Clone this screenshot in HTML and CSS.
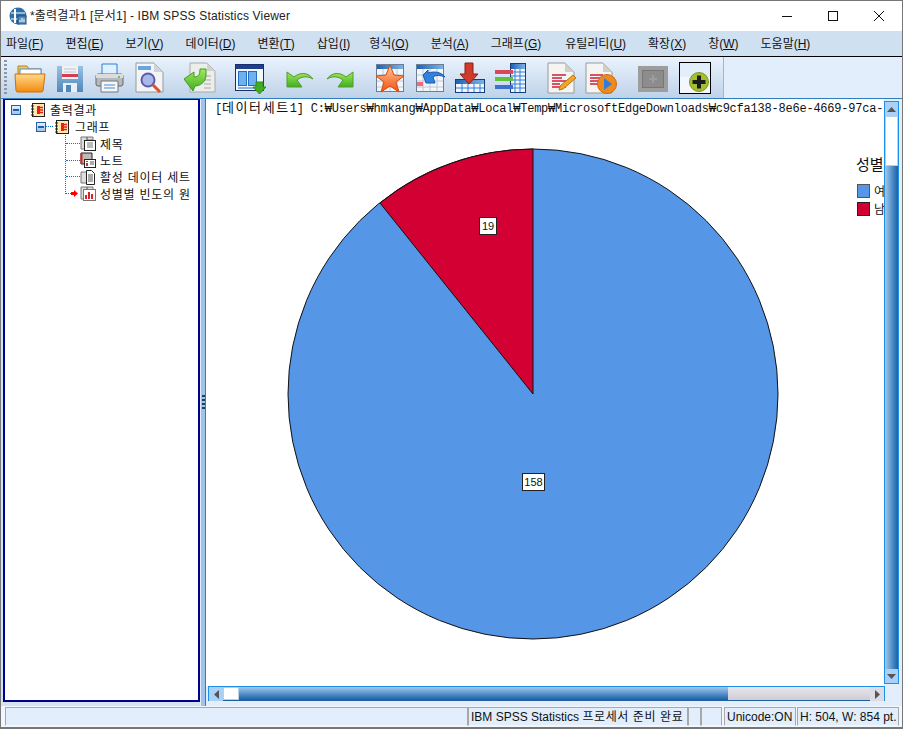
FILE: index.html
```html
<!DOCTYPE html>
<html lang="ko">

<head>
  <meta charset="UTF-8">
  <meta name="viewport" content="width=device-width, initial-scale=1.0">
  <title>출력결과1 - IBM SPSS Statistics Viewer</title>
  <link rel="stylesheet" href="styles.css">
</head>

<body>
  <div class="window">

    <header class="titlebar">
      <svg class="app-icon" width="18" height="18" viewBox="0 0 18 18">
        <circle cx="9" cy="9" r="8.5" fill="#2f6ea5"/>
        <path d="M2 6h14M2 12h14" stroke="#fff" stroke-width="1"/>
        <path d="M6 2v14" stroke="#fff" stroke-width="2"/>
        <rect x="9" y="9" width="8" height="8" fill="#5e8fbd" stroke="#1d4f80"/>
        <path d="M11 15v-2M13 15v-4M15 15v-3" stroke="#fff"/>
      </svg>
      <span class="title-text">*출력결과1 [문서1] - IBM SPSS Statistics Viewer</span>
      <div class="window-buttons">
        <svg width="46" height="30" viewBox="0 0 46 30"><path d="M18 15.5h10" stroke="#111"/></svg>
        <svg width="46" height="30" viewBox="0 0 46 30"><rect x="18.5" y="10.5" width="9" height="9" fill="none" stroke="#111"/></svg>
        <svg width="46" height="30" viewBox="0 0 46 30"><path d="M18 10l10 10M28 10l-10 10" stroke="#111"/></svg>
      </div>
    </header>

    <nav class="menubar">
      <span class="menu-item">파일(<u>F</u>)</span>
      <span class="menu-item">편집(<u>E</u>)</span>
      <span class="menu-item">보기(<u>V</u>)</span>
      <span class="menu-item">데이터(<u>D</u>)</span>
      <span class="menu-item">변환(<u>T</u>)</span>
      <span class="menu-item narrow">삽입(<u>I</u>)</span>
      <span class="menu-item">형식(<u>O</u>)</span>
      <span class="menu-item">분석(<u>A</u>)</span>
      <span class="menu-item wide">그래프(<u>G</u>)</span>
      <span class="menu-item">유틸리티(<u>U</u>)</span>
      <span class="menu-item">확장(<u>X</u>)</span>
      <span class="menu-item">창(<u>W</u>)</span>
      <span class="menu-item">도움말(<u>H</u>)</span>
    </nav>

    <div class="toolbar-row">
      <div class="toolbar">
        <div class="grip"></div>

        <svg class="tool" viewBox="0 0 32 32">
          <defs>
            <linearGradient id="folder" x1="0" y1="0" x2="0" y2="1"><stop offset="0" stop-color="#ffd98a"/><stop offset="1" stop-color="#f28a0e"/></linearGradient>
            <linearGradient id="disk" x1="0" y1="0" x2="0" y2="1"><stop offset="0" stop-color="#9ac2e4"/><stop offset="1" stop-color="#4f86ba"/></linearGradient>
            <linearGradient id="star" x1="0" y1="0" x2="0" y2="1"><stop offset="0" stop-color="#ffc9a0"/><stop offset="1" stop-color="#f2500c"/></linearGradient>
            <linearGradient id="green" x1="0" y1="0" x2="0" y2="1"><stop offset="0" stop-color="#a4e85a"/><stop offset="1" stop-color="#3fae22"/></linearGradient>
            <linearGradient id="head" x1="0" y1="0" x2="1" y2="0"><stop offset="0" stop-color="#1e62b4"/><stop offset="1" stop-color="#7fb2e6"/></linearGradient>
          </defs>
          <path d="M4 4h9l2 3h12v8H4z" fill="#f7c94f" stroke="#b9812a"/>
          <rect x="6" y="7" width="21" height="8" fill="#fff" stroke="#4a8fd0"/>
          <path d="M1 12h30l-2 17a2 2 0 0 1-2 1H4a2 2 0 0 1-2-1z" fill="url(#folder)" stroke="#c9710f"/>
        </svg>

        <svg class="tool" viewBox="0 0 32 32">
          <path d="M3 4h26v26H3z" fill="url(#disk)"/>
          <rect x="8" y="4" width="16" height="13" fill="#f2f2f2"/>
          <path d="M10 7h12M10 10h12" stroke="#b9c6d4"/>
          <rect x="8" y="12" width="16" height="3" fill="#d63a55"/>
          <rect x="9" y="21" width="14" height="9" fill="#e8eff6"/>
          <rect x="12" y="23" width="5" height="7" fill="#4f86ba"/>
        </svg>

        <svg class="tool" viewBox="0 0 32 32">
          <path d="M8 2h15v11H8z" fill="#dff0ff" stroke="#2a7fd5"/>
          <rect x="2" y="12" width="27" height="12" rx="2" fill="#b5b9bd" stroke="#666"/>
          <rect x="2" y="12" width="27" height="4" fill="#dadcde"/>
          <circle cx="25" cy="15" r="1" fill="#3fbf3f"/>
          <path d="M7 19h17v11H7z" fill="#f4f6f8" stroke="#777"/>
          <path d="M10 23h11M10 26h11" stroke="#4a8fd0"/>
        </svg>

        <svg class="tool" viewBox="0 0 32 32">
          <path d="M2 1h18l9 9v20H2z" fill="#f2f4f6" stroke="#999"/>
          <path d="M20 1v9h9z" fill="#cfd4da"/>
          <rect x="4" y="4" width="13" height="4" fill="#6aa5e0"/>
          <circle cx="14" cy="18" r="6.5" fill="#a9b8ea" stroke="#5a5fa8" stroke-width="2"/>
          <path d="M19 23l7 7" stroke="#d9532c" stroke-width="3"/>
        </svg>

        <svg class="tool gap" viewBox="0 0 32 32">
          <path d="M6 1h17l8 8v21H6z" fill="#eceeea" stroke="#aaa"/>
          <path d="M23 1v8h8z" fill="#cfd2cc"/>
          <path d="M20 14h7M20 18h7M20 22h7M20 26h7" stroke="#aaa"/>
          <path d="M0 17L10 10V15C15 15 16 12 16 7H22V13C22 20 16 24 11 24L9 29z" fill="url(#green)" stroke="#3c9a2a"/>
        </svg>

        <svg class="tool gap" viewBox="0 0 32 32">
          <rect x="1.5" y="2.5" width="28" height="26" fill="#f4f8fc" stroke="#1a2f6a"/>
          <rect x="2" y="3" width="27" height="4" fill="#1c3f92"/>
          <rect x="4.5" y="9.5" width="8" height="14" fill="#6fb1ea" stroke="#1f6fc4"/>
          <rect x="14.5" y="9.5" width="8" height="14" fill="#6fb1ea" stroke="#1f6fc4"/>
          <path d="M4 26h16" stroke="#1f6fc4"/>
          <path d="M22 20h7v5h3l-6.500 7L19 25h3z" fill="#3fae22" stroke="#2d8a1a"/>
        </svg>

        <svg class="tool gap" viewBox="0 0 32 32">
          <path d="M3 10L10 15C16 10 24 10 29 17C24 14 18 14 13 18L18 25H3z" fill="url(#green)" stroke="#4f9e2c"/>
        </svg>

        <svg class="tool" viewBox="0 0 32 32">
          <path d="M29 10L22 15C16 10 8 10 3 17C8 14 14 14 19 18L14 25H29z" fill="url(#green)" stroke="#4f9e2c"/>
        </svg>

        <svg class="tool gap" viewBox="0 0 32 32">
          <rect x="2.500" y="2.500" width="27" height="27" fill="#f2f5fa" stroke="#6c7d94"/>
          <rect x="3" y="3" width="26" height="4" fill="url(#head)"/>
          <path d="M3 13h26M3 19h26M3 25h26M9 7v22M16 7v22M23 7v22" stroke="#bcc8d8"/>
          <path d="M16 3l4 10 10 1-8 6 3 10-9-6-9 6 3-10-8-6 10-1z" fill="url(#star)" stroke="#d9480a"/>
        </svg>

        <svg class="tool" viewBox="0 0 32 32">
          <rect x="2.500" y="2.500" width="27" height="27" fill="#f2f5fa" stroke="#6c7d94"/>
          <rect x="3" y="3" width="26" height="4" fill="url(#head)"/>
          <path d="M3 13h26M3 19h26M3 25h26M9 7v22M16 7v22M23 7v22" stroke="#bcc8d8"/>
          <rect x="3" y="20" width="6" height="4" fill="#f2687c"/>
          <path d="M9 13l5-5v3c7-2 13-1 17 4-5-2-9-2-12 0l2 6H12z" fill="#2f82e0" stroke="#175aa8"/>
        </svg>

        <svg class="tool" viewBox="0 0 32 32">
          <rect x="1.500" y="17.500" width="29" height="13" fill="#f2f6fc" stroke="#153e7a"/>
          <rect x="2" y="18" width="28" height="4" fill="url(#head)"/>
          <path d="M2 26h28M8 22v8M14 22v8M20 22v8M26 22v8" stroke="#2f7fd8"/>
          <path d="M11 1h8v11h5l-9 10-9-10h5z" fill="#cf3a2a" stroke="#8c1f14"/>
        </svg>

        <svg class="tool" viewBox="0 0 32 32">
          <rect x="16.500" y="1.500" width="15" height="29" fill="#f2f6fc" stroke="#153e7a"/>
          <rect x="17" y="2" width="14" height="5" fill="url(#head)"/>
          <path d="M17 10h14M17 14h14M17 18h14M17 22h14M17 26h14M21 7v23M26 7v23" stroke="#2f7fd8"/>
          <rect x="1" y="8" width="18" height="4" fill="#d9475a"/>
          <rect x="1" y="15" width="18" height="4" fill="#63bf3f"/>
          <rect x="1" y="23" width="18" height="4" fill="#3f6fd0"/>
        </svg>

        <svg class="tool gap-page" viewBox="0 0 32 32">
          <path d="M3 1h17l9 9v21H3z" fill="#f4f4f2" stroke="#999"/>
          <path d="M20 1v9h9z" fill="#cfcfcc"/>
          <path d="M7 13h14M7 16h10M7 19h14M7 22h8M7 25h14" stroke="#cc1f3a" stroke-width="1.500"/>
          <path d="M15 24L28 13l3 3-13 11-4 1z" fill="#f5a623" stroke="#b9741a"/>
        </svg>

        <svg class="tool" viewBox="0 0 32 32">
          <path d="M1 1h17l9 9v21H1z" fill="#f4f4f2" stroke="#999"/>
          <path d="M18 1v9h9z" fill="#cfcfcc"/>
          <path d="M5 13h13M5 16h10M5 19h9M5 22h7" stroke="#cc1f3a" stroke-width="1.500"/>
          <circle cx="22" cy="22" r="9.500" fill="#f08a1c" stroke="#c96a10"/>
          <path d="M19 16l8 6-8 6z" fill="#2f7fd8"/>
        </svg>

        <svg class="tool gap-grey" viewBox="0 0 32 32">
          <rect x="1" y="4" width="30" height="26" fill="#9d9d9d"/>
          <rect x="5.500" y="8.500" width="21" height="17" fill="#8c8c8c" stroke="#777"/>
          <path d="M16 13v8M12 17h8" stroke="#9d9d9d" stroke-width="2"/>
        </svg>

        <svg class="tool gap-last" viewBox="0 0 32 32">
          <rect x="0.500" y="0.500" width="31" height="31" fill="#e3eefb" stroke="#000"/>
          <rect x="1" y="15" width="30" height="16" fill="#f4f8fd"/>
          <circle cx="20" cy="20" r="9.500" fill="#a2bf2e" stroke="#7a9420"/>
          <path d="M20 13.500v13M13.500 20h13" stroke="#1c1c1c" stroke-width="4"/>
        </svg>
      </div>
    </div>

    <main class="workspace">
      <aside class="outline">
        <ul class="tree">
          <li class="tree-row">
            <span class="expander"></span>
            <svg class="book" viewBox="0 0 14 14"><use href="#book-icon"/></svg>
            <span>출력결과</span>
          </li>
          <li class="tree-row level-1">
            <span class="expander"></span>
            <span class="dash"></span>
            <svg class="book" viewBox="0 0 14 14">
              <symbol id="book-icon" viewBox="0 0 14 14">
                <rect x="1.500" y="0.500" width="12" height="13" fill="#ffe9a8" stroke="#222"/>
                <path d="M0 3h3M0 6h3M0 9h3M0 12h3" stroke="#222"/>
                <path d="M6 3h3v8H6z" fill="#e5201c"/>
                <path d="M8 4.500h4M8 7h4M8 9.500h4" stroke="#e5201c" stroke-width="1.500"/>
              </symbol>
              <use href="#book-icon"/>
            </svg>
            <span>그래프</span>
          </li>
          <li class="leaves">
            <div class="tree-row">
              <span class="leaf-dash"></span>
              <svg class="leaf" viewBox="0 0 16 16">
                <path d="M1 2h6v12H1zM7 2h6v3H7z" fill="#ddd" stroke="#777"/>
                <rect x="4.500" y="5.500" width="11" height="10" fill="#fff" stroke="#222"/>
                <path d="M7 8h6M7 10h6M7 12h6" stroke="#777"/>
              </svg>
              <span>제목</span>
            </div>
            <div class="tree-row">
              <span class="leaf-dash"></span>
              <svg class="leaf" viewBox="0 0 16 16">
                <path d="M1 1h11v11H1z" fill="#bbb" stroke="#222"/>
                <path d="M1.500 1v11" stroke="#d22" stroke-width="2"/>
                <rect x="4.500" y="7.500" width="11" height="8" fill="#fff" stroke="#222"/>
                <path d="M7 9v1M7 11v3" stroke="#d22" stroke-width="2"/>
                <path d="M10 10h4M10 12h4" stroke="#555"/>
              </svg>
              <span>노트</span>
            </div>
            <div class="tree-row">
              <span class="leaf-dash"></span>
              <svg class="leaf" viewBox="0 0 16 16">
                <path d="M1 3h6v11H1z" fill="#ddd" stroke="#777"/>
                <path d="M6.500 1.500h5l3 3v11h-8z" fill="#fff" stroke="#222"/>
                <path d="M8 6h5M8 8h5M8 10h5M8 12h5" stroke="#555"/>
              </svg>
              <span>활성 데이터 세트</span>
            </div>
            <div class="tree-row">
              <span class="leaf-dash short"></span>
              <svg class="arrow" width="7" height="7" viewBox="0 0 7 7"><path d="M0 2h3V0l4 3.500L3 7V5H0z" fill="#f00"/></svg>
              <svg class="leaf" viewBox="0 0 16 16">
                <path d="M1 2h6v12H1zM7 2h6v3H7z" fill="#ddd" stroke="#777"/>
                <rect x="3.500" y="4.500" width="12" height="11" fill="#fff" stroke="#777"/>
                <path d="M6 14v-4M9 14V7M12 14v-5" stroke="#d22" stroke-width="2"/>
              </svg>
              <span>성별별 빈도의 원</span>
            </div>
          </li>
        </ul>
      </aside>

      <div class="splitter"><span class="splitter-dots"></span></div>

      <section class="viewer">
        <div class="viewer-main">
          <div class="viewer-canvas">
            <div class="path-line">[<span class="path-ko">데이터세트</span>1] C:₩Users₩hmkang₩AppData₩Local₩Temp₩MicrosoftEdgeDownloads₩c9cfa138-8e6e-4669-97ca-</div>
            <svg class="chart" viewBox="206 117 678 569">
              <circle cx="533" cy="394" r="245" fill="#5596e6" stroke="#111"/>
              <path d="M533 394V149A245 245 0 0 0 380 203z" fill="#d30034" stroke="#111"/>
              <rect x="479.500" y="217.500" width="17" height="17" fill="#fff" stroke="#222"/>
              <text class="data-label" x="488" y="230">19</text>
              <rect x="522.500" y="473.500" width="22" height="17" fill="#fff" stroke="#222"/>
              <text class="data-label" x="533.500" y="486">158</text>
              <text class="legend-title" x="856" y="170">성별</text>
              <rect x="857.500" y="184.500" width="12" height="13" fill="#5596e6" stroke="#555"/>
              <text class="legend-text" x="874" y="196">여성</text>
              <rect x="857.500" y="202.500" width="12" height="13" fill="#d30034" stroke="#222"/>
              <text class="legend-text" x="874" y="214">남성</text>
            </svg>
          </div>
          <div class="vscroll">
            <span class="sb-btn"><svg width="11" height="7" viewBox="0 0 11 7"><path d="M5.500 1L10 6H1z" fill="#555"/></svg></span>
            <span class="vscroll-thumb"></span>
            <span class="vscroll-track"></span>
            <span class="sb-btn"><svg width="11" height="7" viewBox="0 0 11 7"><path d="M1 1h9L5.500 6z" fill="#555"/></svg></span>
          </div>
        </div>
        <div class="hscroll">
          <span class="sb-btn"><svg width="7" height="11" viewBox="0 0 7 11"><path d="M6 1v9L1 5.500z" fill="#555"/></svg></span>
          <span class="hscroll-thumb"></span>
          <span class="hscroll-track"></span>
          <span class="hscroll-rest"></span>
          <span class="sb-btn grey"><svg width="7" height="11" viewBox="0 0 7 11"><path d="M1 1v9l5-4.500z" fill="#555"/></svg></span>
        </div>
      </section>
    </main>

    <footer class="statusbar">
      <span class="cell grow"></span>
      <span class="cell msg">IBM SPSS Statistics <span class="msg-ko">프로세서 준비 완료</span></span>
      <span class="cell blank-a"></span>
      <span class="cell blank-b"></span>
      <span class="cell unicode">Unicode:ON</span>
      <span class="cell size">H: 504, W: 854 pt.</span>
    </footer>

  </div>
</body>
</html>
```

FILE: styles.css
```css
* {
  box-sizing: border-box;
}

body {
  margin: 0;
  font-family: 'Liberation Sans', 'Noto Sans CJK KR', sans-serif;
  font-size: 12px;
  color: #111;
  background-color: #fff;
}

ul {
  list-style-type: none;
  margin: 0;
  padding: 0;
}

.window {
  width: 903px;
  height: 729px;
  display: flex;
  flex-direction: column;
  overflow: hidden;
  border: 1px solid #777;
  border-bottom-width: 2px;
  background-color: #e2eefb;
}

.titlebar {
  height: 30px;
  display: flex;
  align-items: center;
  background-color: #fff;
  padding-left: 8px;
}

.app-icon {
  margin-right: 3px;
}

.title-text {
  font-size: 12px;
  letter-spacing: 0.18px;
  color: #222;
  margin-top: -3px;
}

.window-buttons {
  margin-left: auto;
  display: flex;
  align-items: center;
}

.menubar {
  flex: none;
  height: 26px;
  display: flex;
  align-items: center;
  gap: 22px;
  padding: 0 0 3px 5px;
  background-color: #cfe0f1;
  border-bottom: 1px solid #000;
}

.menu-item {
  white-space: nowrap;
}

.menu-item.narrow {
  margin-right: -3px;
}

.menu-item.wide {
  margin-right: 2px;
}

.toolbar-row {
  height: 42px;
  flex: none;
  display: flex;
  background-color: #e2eefb;
  border-bottom: 1px solid #2f7fc0;
}

.toolbar {
  width: 723px;
  display: flex;
  align-items: center;
  padding-left: 9px;
  border-right: 1px solid #a9b4c0;
  background: linear-gradient(#eaf3fd, #bed2e8);
  position: relative;
}

.grip {
  position: absolute;
  left: 3px;
  top: 3px;
  bottom: 3px;
  width: 3px;
  background-image: linear-gradient(#8a97a5 50%, transparent 50%);
  background-size: 3px 4px;
}

.tool {
  width: 32px;
  height: 32px;
  margin: 0 4px;
  flex: none;
}

.tool.gap {
  margin-left: 14px;
}

.tool.gap-page {
  margin-left: 15px;
}

.tool.gap-grey {
  margin-left: 16px;
}

.tool.gap-last {
  margin-left: 6px;
}

.workspace {
  flex: 1;
  display: flex;
  min-height: 0;
  padding-left: 2px;
  background-color: #d3e3f3;
}

.outline {
  width: 197px;
  flex: none;
  background-color: #fff;
  border: 2px solid #00008f;
  border-top-width: 1px;
  padding: 1px 0 0 6px;
  margin-bottom: 4px;
}

.tree {
  font-family: 'Noto Sans CJK KR', sans-serif;
  font-size: 12px;
  letter-spacing: 0.75px;
}

.tree-row {
  height: 17px;
  display: flex;
  align-items: center;
  white-space: nowrap;
}

.level-1 {
  padding-left: 25px;
}

.expander {
  width: 10px;
  height: 10px;
  flex: none;
  border: 1px solid #1f5fa8;
  background: linear-gradient(#e6f0fb, #9fc3ea);
  position: relative;
  margin-right: 10px;
}

.expander::after {
  content: '';
  position: absolute;
  left: 1px;
  right: 1px;
  top: 3px;
  height: 2px;
  background-color: #1f5fa8;
}

.level-1 .expander {
  margin-right: 0;
}

.dash {
  width: 7px;
  margin-right: 2px;
  border-top: 1px dotted #0b6fe0;
}

.book {
  width: 14px;
  height: 14px;
  flex: none;
  margin-right: 5px;
}

.level-1 .book {
  margin-right: 6px;
}

.leaves {
  margin-left: 54px;
  border-left: 1px dotted #0b6fe0;
  height: 59px;
}

.leaves .tree-row {
  height: 16.7px;
}

.leaf-dash {
  width: 14px;
  flex: none;
  border-top: 1px dotted #0b6fe0;
}

.leaf-dash.short {
  width: 5px;
}

.arrow {
  flex: none;
  margin-right: 2px;
}

.leaf {
  width: 16px;
  height: 16px;
  flex: none;
  margin-right: 4px;
}

.splitter {
  width: 5px;
  flex: none;
  display: flex;
  align-items: center;
  justify-content: center;
  background-color: #9fc3ea;
  border-left: 1px solid #e2eefb;
}

.splitter-dots {
  width: 3px;
  height: 16px;
  background-image: linear-gradient(#1f3f66 50%, transparent 50%);
  background-size: 3px 4px;
}

.viewer {
  flex: 1;
  min-width: 0;
  display: flex;
  flex-direction: column;
  background-color: #e2eefb;
  border-left: 1px solid #2f7fc0;
  padding-bottom: 5px;
}

.viewer-main {
  flex: 1;
  min-height: 0;
  display: flex;
}

.viewer-canvas {
  width: 678px;
  flex: none;
  overflow: hidden;
  background-color: #fff;
}

.path-line {
  height: 18px;
  line-height: 16px;
  padding-left: 9px;
  white-space: nowrap;
  font-family: 'Liberation Mono', 'Noto Sans CJK KR', monospace;
  letter-spacing: -0.22px;
  font-size: 12px;
}

.path-ko {
  font-family: 'Noto Sans CJK KR', sans-serif;
  font-size: 13px;
  letter-spacing: 1.6px;
}

.chart {
  display: block;
  width: 678px;
  height: 569px;
}

.data-label {
  font-size: 11px;
  text-anchor: middle;
  fill: #111;
}

.legend-title {
  font-family: 'Noto Sans CJK KR', sans-serif;
  font-size: 15px;
  fill: #111;
}

.legend-text {
  font-family: 'Noto Sans CJK KR', sans-serif;
  font-size: 12px;
  fill: #111;
}

.vscroll {
  width: 15px;
  flex: none;
  display: flex;
  flex-direction: column;
  margin: 2px 0 2px 0;
  border: 1px solid #1e90e8;
}

.sb-btn {
  width: 14px;
  height: 14px;
  flex: none;
  display: flex;
  align-items: center;
  justify-content: center;
  background-color: #a9d0f8;
}

.vscroll .sb-btn {
  width: 13px;
}

.vscroll-thumb {
  height: 50px;
  flex: none;
  background-color: #fff;
  border: 1px solid #b9cfe6;
}

.vscroll-track {
  flex: 1;
  background: linear-gradient(90deg, #a5c8ea, #3c7fbf 70%, #1f5f9f);
}

.hscroll {
  height: 15px;
  flex: none;
  display: flex;
  width: 677px;
  margin-left: 2px;
  border: 1px solid #1e90e8;
  border-bottom-color: #1f5f9f;
}

.hscroll-thumb {
  width: 16px;
  flex: none;
  background-color: #fff;
  border: 1px solid #b9cfe6;
}

.hscroll-track {
  width: 489px;
  flex: none;
  background: linear-gradient(#a5c8ea, #3c7fbf 70%, #1f5f9f);
}

.hscroll-rest {
  flex: 1;
  background: linear-gradient(#e8e6ec, #cfccd6);
}

.sb-btn.grey {
  background-color: #dcdce6;
}

.statusbar {
  height: 21px;
  flex: none;
  display: flex;
  padding: 1px 3px 0 4px;
  background-color: #f2f7fd;
}

.cell {
  height: 19px;
  line-height: 18px;
  padding-left: 2px;
  border: 1px solid #a8a8a8;
  border-bottom-color: #f2f7fd;
  background-color: #e2eefb;
  white-space: nowrap;
  overflow: hidden;
}

.grow {
  flex: 1;
}

.msg {
  width: 220px;
  flex: none;
}

.msg-ko {
  letter-spacing: 0.6px;
}

.blank-a {
  width: 13px;
  flex: none;
}

.blank-b {
  width: 21px;
  flex: none;
  margin-right: 2px;
}

.unicode {
  width: 72px;
  flex: none;
  margin-right: 1px;
}

.size {
  width: 102px;
  flex: none;
}
```
